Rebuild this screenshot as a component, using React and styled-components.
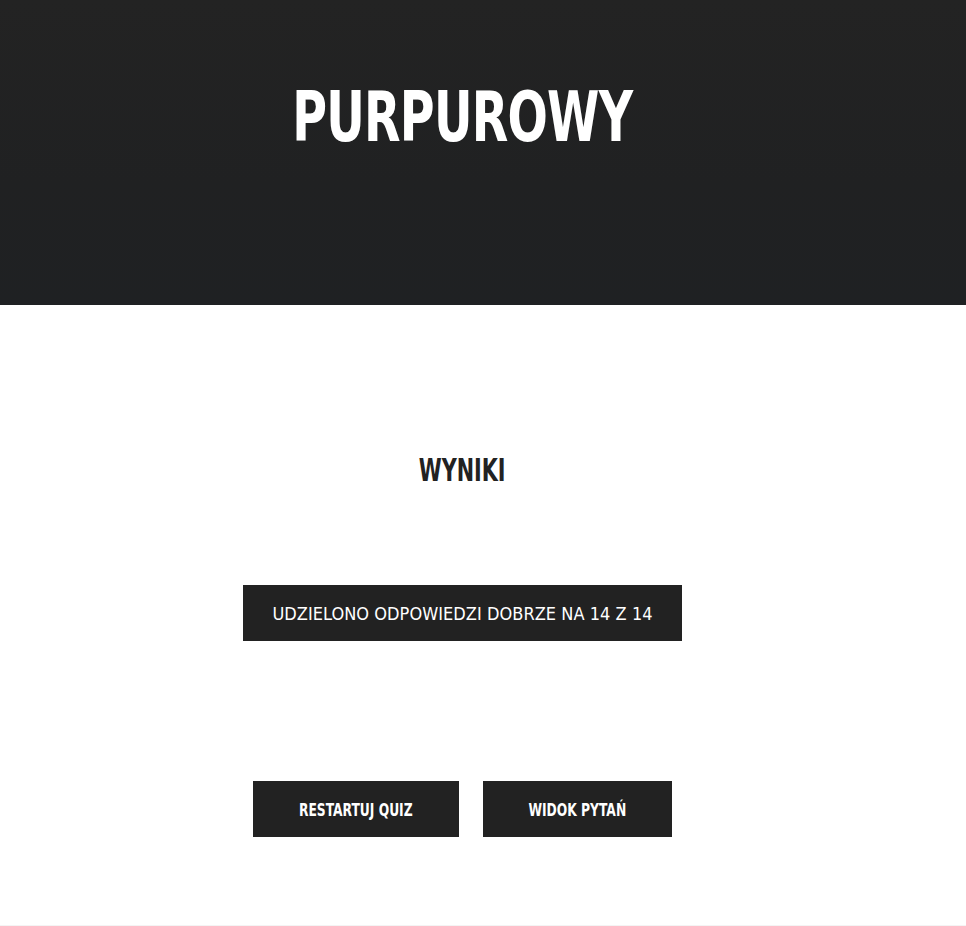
import React from "react";
import styled, { createGlobalStyle } from "styled-components";

const Global = createGlobalStyle`
  html, body { margin: 0; padding: 0; background: #ffffff; }
  body { font-family: "DejaVu Sans Condensed", "Liberation Sans", sans-serif; }
`;

const Page = styled.div`
  display: flex;
  flex-direction: column;
  border-bottom: 1px solid #f4f4f4;
  box-sizing: border-box;
  height: 926px;
`;

const Hero = styled.header`
  height: 305px;
  background: linear-gradient(180deg, #232323 0%, #202122 60%, #1f2123 100%);
  display: flex;
  justify-content: center;
  padding-right: 41px;
  box-sizing: border-box;
`;

const Title = styled.h1`
  margin: 0;
  padding-top: 77px;
  color: #ffffff;
  font-family: "DejaVu Sans Condensed", sans-serif;
  font-weight: 700;
  font-size: 69px;
  line-height: 80px;
  letter-spacing: -1px;
  transform: scaleX(0.765);
`;

const Main = styled.main`
  display: flex;
  flex-direction: column;
  align-items: center;
  padding-right: 41px;
`;

const Heading = styled.h2`
  margin: 145px 0 0;
  color: #222222;
  font-family: "DejaVu Sans Condensed", sans-serif;
  font-weight: 700;
  font-size: 32.5px;
  line-height: 40px;
  transform: scaleX(0.71);
`;

const ScoreBox = styled.div`
  margin-top: 95px;
  width: 439px;
  height: 56px;
  background: #222222;
  color: #ffffff;
  display: flex;
  align-items: center;
  justify-content: center;
  font-family: "DejaVu Sans Condensed", sans-serif;
  font-size: 18px;
  letter-spacing: 0.04px;
`;

const Actions = styled.div`
  margin-top: 140px;
  display: flex;
  gap: 24px;
`;

const Button = styled.button`
  width: ${(p) => p.$w}px;
  height: 56px;
  border: 0;
  border-radius: 0;
  background: #222222;
  color: #ffffff;
  font-family: "DejaVu Sans Condensed", sans-serif;
  font-weight: 700;
  font-size: 18px;
  cursor: pointer;
  padding: 0;
`;

const Label = styled.span`
  display: inline-block;
  transform: scaleX(0.76);
`;

export default function App() {
  return (
    <>
      <Global />
      <Page>
        <Hero>
          <Title>PURPUROWY</Title>
        </Hero>
        <Main>
          <Heading>WYNIKI</Heading>
          <ScoreBox>UDZIELONO ODPOWIEDZI DOBRZE NA 14 Z 14</ScoreBox>
          <Actions>
            <Button $w={206}><Label>RESTARTUJ QUIZ</Label></Button>
            <Button $w={189}><Label>WIDOK PYTAŃ</Label></Button>
          </Actions>
        </Main>
      </Page>
    </>
  );
}
